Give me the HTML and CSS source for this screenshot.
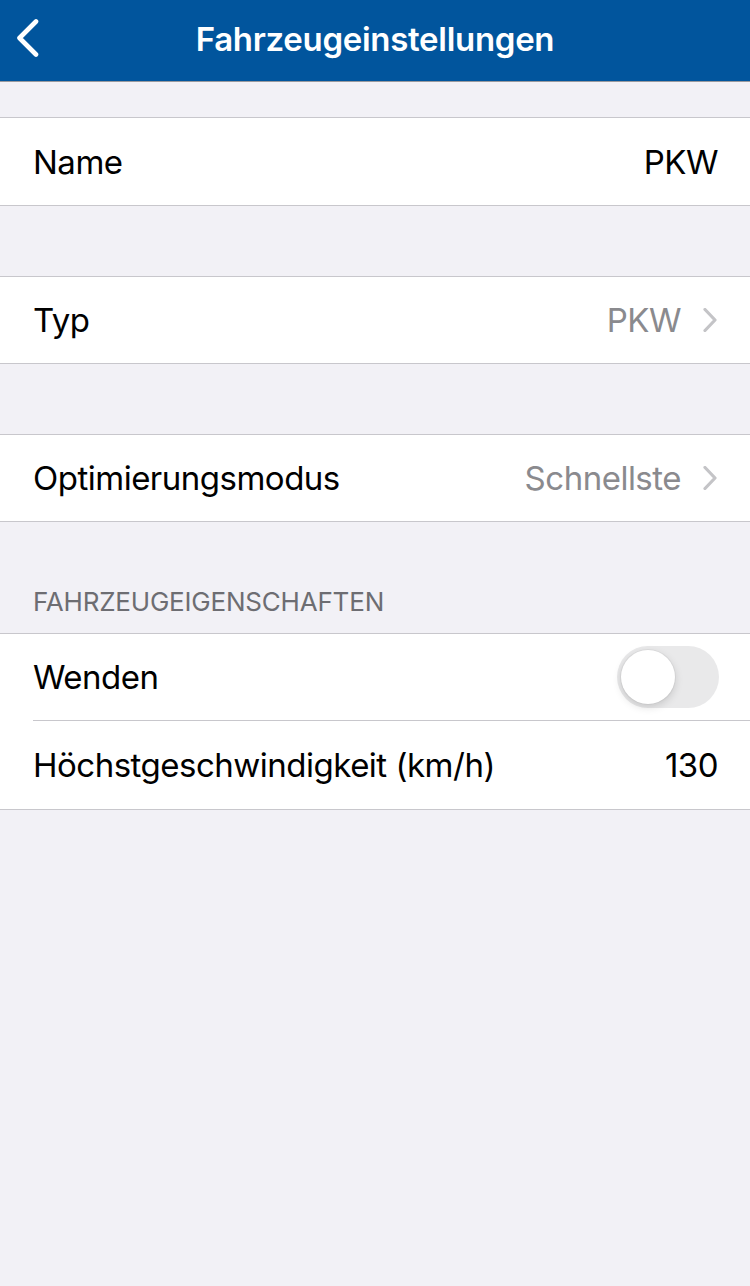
FILE: index.html
```html
<!DOCTYPE html>
<html lang="de">
<head>
<meta charset="utf-8">
<title>Fahrzeugeinstellungen</title>
<link rel="stylesheet" href="styles.css">
</head>
<body>
<header class="navbar">
  <button class="back" aria-label="Zurück">
    <svg width="26" height="40" viewBox="0 0 26 40"><path d="M20 2.5 L3.5 19 L20 35.5" fill="none" stroke="#fff" stroke-width="4.6" stroke-linecap="round" stroke-linejoin="round"/></svg>
  </button>
  <h1 class="title">Fahrzeugeinstellungen</h1>
</header>
<main class="content">
  <section class="group">
    <div class="row tall">
      <span class="label">Name</span>
      <span class="value">PKW</span>
    </div>
  </section>
  <section class="group">
    <div class="row">
      <span class="label">Typ</span>
      <span class="value muted">PKW</span>
      <svg class="chev" width="14" height="24" viewBox="0 0 14 24"><path d="M2 1.5 L12 12 L2 22.5" fill="none" stroke="#c4c4c7" stroke-width="3.2" stroke-linecap="round" stroke-linejoin="round"/></svg>
    </div>
  </section>
  <section class="group">
    <div class="row">
      <span class="label">Optimierungsmodus</span>
      <span class="value muted">Schnellste</span>
      <svg class="chev" width="14" height="24" viewBox="0 0 14 24"><path d="M2 1.5 L12 12 L2 22.5" fill="none" stroke="#c4c4c7" stroke-width="3.2" stroke-linecap="round" stroke-linejoin="round"/></svg>
    </div>
  </section>
  <h2 class="section-title">FAHRZEUGEIGENSCHAFTEN</h2>
  <section class="group tight">
    <div class="row sep">
      <span class="label">Wenden</span>
      <span class="toggle"><span class="knob"></span></span>
    </div>
    <div class="row last">
      <span class="label">Höchstgeschwindigkeit (km/h)</span>
      <span class="value">130</span>
    </div>
  </section>
</main>
</body>
</html>
```
FILE: styles.css
```css
* { box-sizing: border-box; }
html, body {
  margin: 0;
  padding: 0;
}
body {
  width: 750px;
  min-height: 1286px;
  background: #f2f1f6;
  font-family: Inter, "Noto Sans", "Liberation Sans", sans-serif;
  -webkit-font-smoothing: antialiased;
}
.navbar {
  height: 82px;
  background: #01559d;
  border-bottom: 1px solid #9a9a9e;
  display: flex;
  align-items: center;
  justify-content: center;
  position: relative;
}
.back {
  position: absolute;
  left: 16px;
  top: 19px;
  padding: 0;
  margin: 0;
  border: 0;
  background: none;
  display: flex;
}
.title {
  margin: 0;
  color: #fff;
  font-size: 33px;
  font-weight: 600;
  letter-spacing: -0.3px;
  padding-bottom: 4px;
}
.content {
  display: flex;
  flex-direction: column;
  padding-top: 35px;
}
.group {
  background: #fff;
  border-top: 1px solid #c8c7cc;
  border-bottom: 1px solid #c8c7cc;
  margin-bottom: 70px;
}
.group.tight { margin-bottom: 0; }
.row {
  height: 86px;
  display: flex;
  align-items: center;
  padding: 0 32px 0 33px;
  font-size: 33px;
  color: #000;
  letter-spacing: -0.5px;
  position: relative;
}
.row.tall { height: 87px; }
.row.last { height: 88px; margin-top: 1px; }
.row.sep::after {
  content: "";
  position: absolute;
  left: 33px;
  right: 0;
  bottom: -1px;
  height: 1px;
  background: #c8c7cc;
}
.label { flex: 1; }
.value { color: #000; }
.value.muted { color: #8a8a8e; }
.chev { margin-left: 22px; margin-right: 1px; }
.section-title {
  margin: -70px 0 0;
  height: 111px;
  display: flex;
  align-items: flex-end;
  padding: 0 33px 16px;
  font-size: 26px;
  font-weight: 400;
  color: #6d6d72;
  letter-spacing: -0.2px;
}
.toggle {
  width: 102px;
  height: 62px;
  border-radius: 31px;
  background: #e9e9ea;
  position: relative;
  margin-right: -1px;
}
.knob {
  position: absolute;
  left: 4px;
  top: 4px;
  width: 54px;
  height: 54px;
  border-radius: 50%;
  background: #fff;
  box-shadow: 0 3px 8px rgba(0,0,0,0.15), 0 0 0 1px rgba(0,0,0,0.04);
}
```
